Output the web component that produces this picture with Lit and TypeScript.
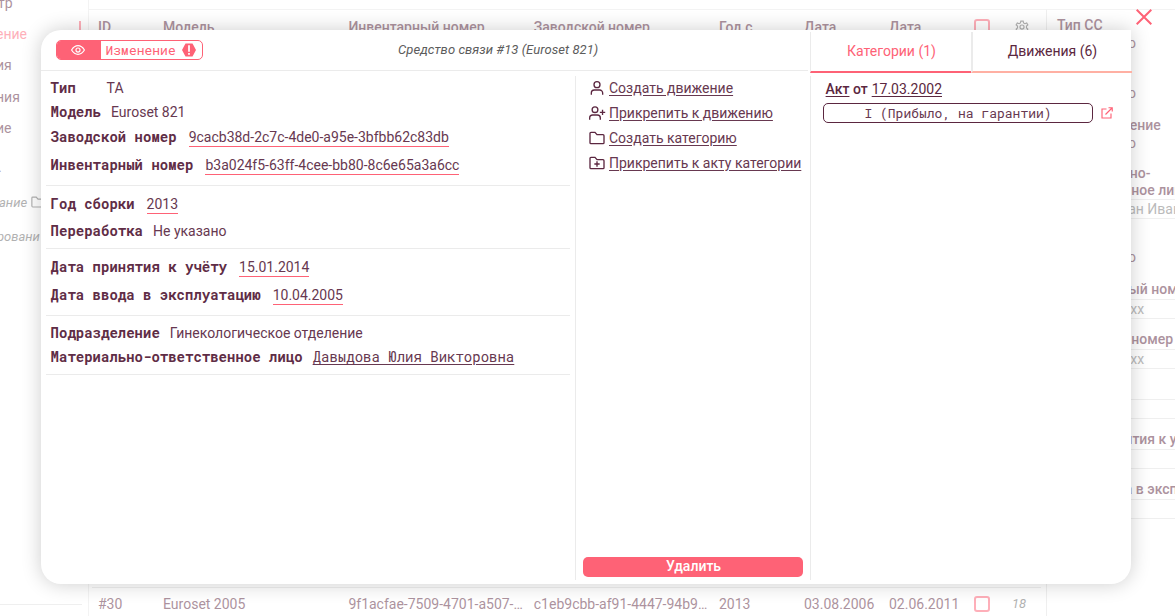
import { LitElement, html, css, svg } from "lit";
import { customElement } from "lit/decorators.js";
import { classMap } from "lit/directives/class-map.js";

const icon = (name: string, body: unknown) =>
  html`<svg class="icon ${name}" viewBox="0 0 24 24" aria-hidden="true">${body}</svg>`;

const folder = svg`<path d="M1.500 5a1.500 1.500 0 0 1 1.500-1.500h6l3 3.500H21A1.500 1.500 0 0 1 22.500 8.500V19A1.500 1.500 0 0 1 21 20.500H3A1.500 1.500 0 0 1 1.500 19z"/>`;
const person = svg`<circle cx="12" cy="7" r="4.500"/><path d="M3.500 22v-2.500a4.500 4.500 0 0 1 4.500-4.500h8a4.500 4.500 0 0 1 4.500 4.500V22"/>`;
const gear = svg`<circle cx="12" cy="12" r="3.500"/><path d="M10 2h4l.7 3 2.300 1.300 3-1.300 2 3.500-2.300 2v3l2.300 2-2 3.500-3-1-2.300 1.300L14 22.500h-4l-.7-3.200L7 18l-3 1-2-3.500 2.300-2v-3L2 8.500 4 5l3 1.300L9.300 5z"/>`;
const plusPerson = svg`<circle cx="9" cy="7" r="4.300"/><path d="M1 22v-2.500A4.500 4.500 0 0 1 5.500 15h7a4.500 4.500 0 0 1 4.500 4.500V22M20.300 7v8M16.300 11h8"/>`;

interface Field { label: string; value: string; kind?: "edit" | "link" }

const sections: Field[][] = [
  [
    { label: "Тип", value: "ТА" },
    { label: "Модель", value: "Euroset 821" },
    { label: "Заводской номер", value: "9cacb38d-2c7c-4de0-a95e-3bfbb62c83db", kind: "edit" },
    { label: "Инвентарный номер", value: "b3a024f5-63ff-4cee-bb80-8c6e65a3a6cc", kind: "edit" },
  ],
  [
    { label: "Год сборки", value: "2013", kind: "edit" },
    { label: "Переработка", value: "Не указано" },
  ],
  [
    { label: "Дата принятия к учёту", value: "15.01.2014", kind: "edit" },
    { label: "Дата ввода в эксплуатацию", value: "10.04.2005", kind: "edit" },
  ],
  [
    { label: "Подразделение", value: "Гинекологическое отделение" },
    { label: "Материально-ответственное лицо", value: "Давыдова Юлия Викторовна", kind: "link" },
  ],
];

const filters = [
  { label: "Тип СС", value: "Не выбрано" },
  { label: "Модель", value: "Не выбрано" },
  { label: "Подразделение", value: "Не выбрано", tight: true },
  { label: "Материально-ответственное лицо", value: "Иванов Иван Иванович", input: true, wrap: true },
  { label: "Категория", value: "Не выбрано" },
  { label: "Инвентарный номер", value: "xxxxxxxx-xxxx", input: true },
  { label: "Заводской номер", value: "xxxxxxxx-xxxx", input: true },
  { label: "Год сборки", value: "", input: true },
  { label: "Дата принятия к учёту", value: "", input: true },
  { label: "Дата ввода в эксплуатацию", value: "", input: true },
];

@customElement("page-backdrop")
class PageBackdrop extends LitElement {
  static styles = css`
    :host { display: grid; grid-template-columns: 88px 958px 129px; height: 616px; width: 1175px; overflow: hidden; opacity: .5; color: #5b2740; font: 14px/20px Roboto, sans-serif; }
    .icon { fill: none; stroke: currentColor; stroke-width: 2; }
    .nav { display: flex; flex-direction: column; border-right: 1px solid #e8e8e8; box-sizing: border-box; margin-right: -1px; }
    .item { height: 31.600px; line-height: 31px; margin-left: -4px; white-space: nowrap; flex: none; }
    .first { height: 18.500px; line-height: 6px; margin-left: -2px; }
    .active { color: #fe6276; display: flex; justify-content: space-between; align-items: center; }
    .mark { width: 2px; height: 26px; background: #fe6276; margin-right: 7px; }
    .dot { line-height: 44px; height: 40.500px; margin-left: -2px; }
    .sub { font-size: 13px; font-style: italic; color: #666; display: flex; align-items: center; gap: 4px; height: 34px; margin-left: -1px; }
    .long { margin-left: -3px; }
    .sub .icon { width: 14px; height: 14px; flex: none; }
    .foot { margin-top: auto; height: 11px; margin-right: 6px; border-top: 1px solid #e0e0e0; }
    .table { display: flex; flex-direction: column; justify-content: space-between; padding-top: 9px; }
    .row { display: grid; grid-template-columns: 65px 185.400px 185.400px 185.200px 85px 85px 85px 38px 1fr; align-items: center; padding-left: 10px; white-space: nowrap; }
    .head { font-weight: 500; border-top: 1px solid #e8e8e8; height: 34px; }
    .body { border-top: 1px solid #e0e0e0; height: 25px; padding: 3px 0 0 6px; margin: 0 5px 0 4px; }
    .box { width: 12px; height: 12px; border: 2px solid #fe6276; border-radius: 3px; }
    .gear { width: 14px; height: 14px; margin-left: 3px; color: #666; }
    .num { font-size: 13px; font-style: italic; color: #666; }
    .filters { border-left: 1px solid #e0e0e0; padding: 7px 0 0 10px; white-space: nowrap; margin-top: 9px; border-top: 1px solid #e8e8e8; }
    .filter { margin-bottom: 13px; }
    .tight { margin-bottom: 11px; }
    .label { font-weight: 500; line-height: 17px; height: 17px; }
    .wrap { height: 33px; }
    .value { height: 20px; line-height: 19px; box-sizing: border-box; }
    .input { border-top: 1px solid #e0e0e0; border-bottom: 1px solid #e0e0e0; color: #777; line-height: 18px; position: relative; top: 1px; }
  `;
  render() {
    return html`
      <div class="nav">
        <div class="item first">тр</div>
        <div class="item active">ение<span class="mark"></span></div>
        <div class="item">ия</div>
        <div class="item">ния</div>
        <div class="item">ие</div>
        <div class="item dot">.</div>
        <div class="item sub">ание ${icon("folder", folder)}</div>
        <div class="item sub long">ровани</div>
        <div class="foot"></div>
      </div>
      <div class="table">
        <div class="row head">
          <span>ID</span><span>Модель</span><span>Инвентарный номер</span><span>Заводской номер</span>
          <span>Год с</span><span>Дата</span><span>Дата</span><span class="box"></span>${icon("gear", gear)}
        </div>
        <div class="row body">
          <span>#30</span><span>Euroset 2005</span><span>9f1acfae-7509-4701-a507-…</span><span>c1eb9cbb-af91-4447-94b9…</span>
          <span>2013</span><span>03.08.2006</span><span>02.06.2011</span><span class="box"></span><span class="num">18</span>
        </div>
      </div>
      <div class="filters">
        ${filters.map((f) => html`
          <div class=${classMap({ filter: true, tight: !!f.tight })}>
            <div class=${classMap({ label: true, wrap: !!f.wrap })}>${f.wrap ? html`Материально-<br />ответственное лицо` : f.label}</div>
            <div class=${classMap({ value: true, input: !!f.input })}>${f.value}</div>
          </div>`)}
      </div>`;
  }
}

@customElement("device-dialog")
class DeviceDialog extends LitElement {
  static styles = css`
    :host { display: grid; grid-template-columns: 769px 322px; grid-template-rows: 43px 1fr; box-sizing: border-box; background: #fff; border-radius: 20px 0 20px 20px; box-shadow: 0 0 20px rgba(0, 0, 0, .2); color: #673850; font: 14px/20px Roboto, sans-serif; }
    .icon { width: 16px; height: 16px; fill: none; stroke: #5b2740; stroke-width: 2; flex: none; overflow: visible; }
    .top { display: grid; grid-template-columns: 357px 1fr; border-bottom: 1px solid #ebebeb; height: 40px; margin-right: 2px; }
    .mode { display: flex; box-sizing: border-box; width: 147px; height: 20px; margin: 10px 0 0 15px; border: 1px solid #fe6276; border-radius: 5px; color: #fe6276; overflow: hidden; font: 13px/18px "Roboto Mono", "Liberation Mono", monospace; }
    .view { display: flex; align-items: center; justify-content: center; width: 42px; padding-right: 2px; background: #fe6276; }
    .view .icon { width: 14px; height: 14px; stroke: #fff; }
    .change { display: flex; align-items: center; gap: 6px; padding-left: 4.500px; }
    .alert { width: 14px; height: 14px; fill: #fe6276; }
    .title { font-size: 13px; letter-spacing: .06px; font-style: italic; color: #5c5c5c; padding-top: 10px; white-space: nowrap; }
    .tabs { display: grid; grid-template-columns: 161px 161px; margin-top: 2px; }
    .tab { text-align: center; line-height: 38px; border-left: 1px solid #ebebeb; border-bottom: 2px solid #ffb0a3; height: 39px; padding-left: 1px; color: #5b2740; }
    .tab + .tab { border-left-width: 2px; padding-left: 0; }
    .tab.on { color: #fe6276; border-bottom-color: #fe6276; }
    .content { display: grid; grid-template-columns: 534px 235px; margin: 3px 0 4px; }
    .info { padding: 0 5px; }
    .section { padding: 5px 5px 5px 4.600px; border-bottom: 1px solid #ebebeb; }
    .section:first-child { padding-top: 0; }
    .field { display: flex; gap: 10px; height: 24px; align-items: center; white-space: nowrap; }
    .name { font: bold 14px/20px "Roboto Mono", "Liberation Mono", monospace; min-width: 46px; color: #5f2d46; }
    .edit { height: 27px; padding-bottom: 1px; gap: 12px; }
    .edit .name { margin-bottom: 1px; }
    .edit .data { border-bottom: 1px solid #fe6276; line-height: 18px; }
    .link .data { font-family: "Roboto Mono", "Liberation Mono", monospace; text-decoration: underline; text-underline-offset: 2px; }
    .actions { border-left: 1px solid #ebebeb; display: flex; flex-direction: column; padding: 0 7px 3px; }
    .action { display: flex; align-items: center; gap: 4px; height: 25px; padding-left: 6px; white-space: nowrap; text-decoration: underline; text-underline-offset: 2px; }
    .action:first-child { margin-top: -1px; }
    .delete { margin-top: auto; height: 20px; background: #fe6276; color: #fff; border-radius: 5px; text-align: center; font-weight: 500; line-height: 19px; padding-left: 1px; }
    .acts { border-left: 1px solid #ebebeb; margin: 3px 0 4px; padding: 3px 0 0 12px; }
    .act { margin-left: 2.600px; font-weight: 500; color: #5b2740; }
    .act u { text-underline-offset: 2px; }
    .act .date { font-weight: 400; margin-left: .5px; }
    .line { display: flex; align-items: center; gap: 8px; margin-top: 4px; }
    .category { box-sizing: border-box; width: 270px; height: 20px; border: 1px solid #5b2740; border-radius: 5px; text-align: center; font: 13px/19px "Roboto Mono", "Liberation Mono", monospace; }
    .out { width: 12px; height: 12px; stroke: #fe6276; stroke-width: 2.300; }
  `;
  render() {
    return html`
      <div class="top">
        <div class="mode">
          <span class="view">${icon("eye", svg`<path d="M1 12c3-5 7-7.500 11-7.500S20 7 23 12c-3 5-7 7.500-11 7.500S4 17 1 12z"/><circle cx="12" cy="12" r="3.500"/>`)}</span>
          <span class="change">Изменение
            <svg class="alert" viewBox="0 0 24 24"><path d="M6 1h12l6 11-6 11H6L0 12z"/><path fill="#fff" d="M10.500 4h3v11h-3zM10.500 17h3v3h-3z"/></svg>
          </span>
        </div>
        <div class="title">Средство связи #13 (Euroset 821)</div>
      </div>
      <div class="tabs"><div class="tab on">Категории (1)</div><div class="tab">Движения (6)</div></div>
      <div class="content">
        <div class="info">
          ${sections.map((s) => html`<div class="section">${s.map((f) => html`
            <div class="field ${f.kind ?? ""}"><span class="name">${f.label}</span><span class="data">${f.value}</span></div>`)}</div>`)}
        </div>
        <div class="actions">
          <div class="action">${icon("user", person)}<span>Создать движение</span></div>
          <div class="action">${icon("user-add", plusPerson)}<span>Прикрепить к движению</span></div>
          <div class="action">${icon("folder", folder)}<span>Создать категорию</span></div>
          <div class="action">${icon("folder-add", svg`${folder}<path d="M12 9.500v8M8 13.500h8"/>`)}<span>Прикрепить к акту категории</span></div>
          <div class="delete">Удалить</div>
        </div>
      </div>
      <div class="acts">
        <div class="act"><u>Акт</u> от <u class="date">17.03.2002</u></div>
        <div class="line"><div class="category">I (Прибыло, на гарантии)</div>${icon("out", svg`<path d="M11 4H2v18h18v-9M15 1.500h7.500V9M22 2L9 15"/>`)}</div>
      </div>`;
  }
}

@customElement("app-root")
class AppRoot extends LitElement {
  static styles = css`
    :host { display: block; position: relative; width: 1175px; height: 616px; overflow: hidden; background: #fff; }
    .dialog { position: absolute; left: 41px; top: 30px; width: 1090px; height: 554px; }
    .close { position: absolute; left: 1136px; top: 9px; width: 16px; height: 16px; fill: none; stroke: #fe6276; stroke-width: 2; }
  `;
  render() {
    return html`
      <page-backdrop></page-backdrop>
      <device-dialog class="dialog"></device-dialog>
      <svg class="close" viewBox="0 0 16 16"><path d="M.7.7l14.600 14.600M15.300.7L.7 15.300"/></svg>`;
  }
}
